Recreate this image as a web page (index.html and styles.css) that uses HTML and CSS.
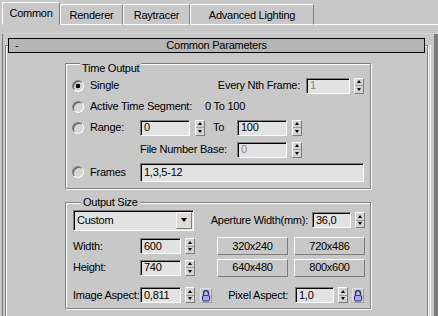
FILE: index.html
```html
<!DOCTYPE html>
<html>
<head>
<meta charset="utf-8">
<link rel="stylesheet" href="styles.css">
</head>
<body>
<div class="tabs">
  <div class="tab active w-com">Common</div>
  <div class="tab w-rend">Renderer</div>
  <div class="tab w-ray">Raytracer</div>
  <div class="tab w-adv">Advanced Lighting</div>
  <div class="tab-fill"></div>
</div>
<div class="page">
  <div class="panel">
    <div class="roll-col">
      <div class="rollout">
        <div class="roll-head"><span class="minus">-</span><span class="roll-title">Common Parameters</span><span></span></div>

        <div class="group time">
          <div class="group-title">Time Output</div>
          <div class="row tr1">
            <div class="lead"><span class="radio on"></span>Single</div>
            <div class="lbl-nth">Every Nth Frame:</div>
            <div class="field dis w-nth">1</div>
            <div class="spin"><i class="up"></i><i class="dn"></i></div>
          </div>
          <div class="row tr2">
            <div class="lead wide"><span class="radio"></span>Active Time Segment:</div>
            <div>0 To 100</div>
          </div>
          <div class="row tr3">
            <div class="lead"><span class="radio"></span>Range:</div>
            <div class="field w-rng">0</div>
            <div class="spin s5"><i class="up"></i><i class="dn"></i></div>
            <div class="lbl-to">To</div>
            <div class="field w-rng">100</div>
            <div class="spin s5"><i class="up"></i><i class="dn"></i></div>
          </div>
          <div class="row tr4">
            <div class="lead"></div>
            <div class="lbl-fnb">File Number Base:</div>
            <div class="field dis w-rng">0</div>
            <div class="spin s5"><i class="up"></i><i class="dn"></i></div>
          </div>
          <div class="row tr5">
            <div class="lead"><span class="radio"></span>Frames</div>
            <div class="field w-frames">1,3,5-12</div>
          </div>
        </div>

        <div class="group size">
          <div class="group-title">Output Size</div>
          <div class="row or1">
            <div class="select"><span class="sel-text">Custom</span><span class="sel-btn"><i></i></span></div>
            <div class="lbl-ap">Aperture Width(mm):</div>
            <div class="field w-ap">36,0</div>
            <div class="spin"><i class="up"></i><i class="dn"></i></div>
          </div>
          <div class="row or2">
            <div class="lbl">Width:</div>
            <div class="field w-sz">600</div>
            <div class="spin"><i class="up"></i><i class="dn"></i></div>
            <div class="btn first">320x240</div>
            <div class="btn">720x486</div>
          </div>
          <div class="row or3">
            <div class="lbl">Height:</div>
            <div class="field w-sz">740</div>
            <div class="spin"><i class="up"></i><i class="dn"></i></div>
            <div class="btn first">640x480</div>
            <div class="btn">800x600</div>
          </div>
          <div class="row or4">
            <div class="lbl">Image Aspect:</div>
            <div class="field w-sz">0,811</div>
            <div class="spin"><i class="up"></i><i class="dn"></i></div>
            <div class="lock l1"><svg width="12" height="15" viewBox="0 0 12 15"><path d="M3.6 7.5V5.2a2.4 2.4 0 0 1 4.8 0v2.3" fill="none" stroke="#2c2c9c" stroke-width="1.4"/><rect x="2.5" y="7.5" width="7" height="5.5" rx="1.5" fill="#a9a9e6" stroke="#2c2c9c"/></svg></div>
            <div class="lbl-pa">Pixel Aspect:</div>
            <div class="field w-ap">1,0</div>
            <div class="spin"><i class="up"></i><i class="dn"></i></div>
            <div class="lock"><svg width="12" height="15" viewBox="0 0 12 15"><path d="M3.6 7.5V5.2a2.4 2.4 0 0 1 4.8 0v2.3" fill="none" stroke="#2c2c9c" stroke-width="1.4"/><rect x="2.5" y="7.5" width="7" height="5.5" rx="1.5" fill="#a9a9e6" stroke="#2c2c9c"/></svg></div>
          </div>
        </div>
      </div>
    </div>
    <div class="scroll"><div class="thumb"></div><div class="trough"></div></div>
  </div>
</div>
</body>
</html>
```
FILE: styles.css
```css
* { box-sizing: border-box; margin: 0; padding: 0; }
html, body { width: 438px; height: 316px; overflow: hidden; background: #c8c8c8; }
body {
  font-family: "Liberation Sans", Arial, sans-serif;
  font-size: 11px;
  letter-spacing: -0.25px;
  line-height: 13px;
  color: #000;
}

/* tabs */
.tabs { display: flex; align-items: flex-end; height: 25px; padding-left: 2px; }
.tab {
  height: 21px;
  display: flex; align-items: center; justify-content: center;
  padding-top: 1px;
  border-left: 1px solid #fff;
  border-top: 1px solid #fff;
  border-right: 1px solid #7c7c7c;
  border-bottom: 1px solid #fff;
  border-radius: 2px 2px 0 0;
}
.tab.active { height: 23px; border-bottom-color: #c8c8c8; padding-bottom: 1px; }
.w-com { width: 58px; }
.w-rend { width: 63px; }
.w-ray { width: 67px; }
.w-adv { width: 124px; }
.tab-fill { flex: 1; border-bottom: 1px solid #fff; }

/* panel */
.page { padding-top: 8px; }
.panel {
  display: flex;
  height: 283px;
  overflow: hidden;
  margin-left: 2px;
  border-left: 1px solid #7c7c7c;
  border-top: 1px solid #d6d6d6;
}
.roll-col { flex: 1; padding: 0 2px; }
.scroll { width: 8px; display: flex; }
.thumb { width: 4px; margin-top: 11px; border-left: 1px solid #fff; }
.trough { width: 4px; background: #7c7c7c; }

.rollout {
  margin-top: 11px;
  border: 1px solid #808080;
  box-shadow: inset 1px 1px 0 #fff, 1px 1px 0 #fff;
  padding-bottom: 12px;
}
.roll-head {
  margin: -8px 2px 0 2px;
  height: 15px;
  border: 1px solid #000;
  background: #b6b6b6;
  display: grid;
  grid-template-columns: 1fr auto 1fr;
  align-items: center;
}
.minus { padding-left: 6px; }

/* groups */
.group {
  width: 306px;
  margin-left: 59px;
  border: 1px solid #808080;
  box-shadow: inset 1px 1px 0 #fff, 1px 1px 0 #fff;
}
.group-title {
  width: max-content;
  height: 13px;
  margin: -7px 0 0 8px;
  padding: 0 2px;
  background: #c8c8c8;
}
.time { margin-top: 10px; padding: 5px 0 5px 6px; }
.size { margin-top: 13px; padding: 0 0 2px 7px; }

.row { display: flex; align-items: center; height: 21px; }
.tr4 { height: 23px; }
.tr5 { height: 22px; }
.or1 { height: 22px; }
.or2 { height: 22px; margin-top: 4px; }
.or4 { height: 22px; margin-top: 6px; }

.lead { width: 68px; display: flex; align-items: center; flex: none; }
.lead.wide { width: 133px; }
.radio {
  width: 12px; height: 12px; flex: none;
  margin-right: 6px;
  border-radius: 50%;
  border: 1px solid;
  border-color: #808080 #ffffff #ffffff #808080;
  background: #d6d6d6;
  box-shadow: inset 1px 1px 0 #5a5a5a;
}
.radio.on { background: radial-gradient(circle at 50% 50%, #000 0 2px, #d6d6d6 2.6px); }

.lbl-nth { width: 160px; text-align: right; flex: none; }
.lbl-to { width: 24px; margin-left: 8px; flex: none; }
.lbl-fnb { width: 97px; flex: none; }
.lbl-ap { width: 114px; text-align: right; flex: none; }
.lbl { width: 67px; flex: none; }
.lbl-pa { width: 76px; text-align: right; flex: none; }

.field {
  height: 16px;
  flex: none;
  display: flex; align-items: center;
  padding-left: 3px;
  border: 1px solid;
  border-color: #808080 #ffffff #ffffff #808080;
  box-shadow: inset 1px 1px 0 #000;
  background: #e2e2e2;
}
.field.dis { color: #8a8a8a; }
.w-nth { width: 44px; margin-left: 6px; }
.w-rng { width: 50px; }
.w-frames { width: 224px; height: 19px; }
.w-ap { width: 39px; margin-left: 4px; }
.lbl-pa + .w-ap { margin-left: 7px; }
.w-sz { width: 41px; }

.spin {
  width: 10px; height: 16px; flex: none;
  margin-left: 4px;
  display: flex; flex-direction: column;
  border: 1px solid;
  border-color: #ffffff #7c7c7c #7c7c7c #ffffff;
  background: #d4d4d4;
}
.spin.s5 { margin-left: 5px; }
.spin i { flex: 1; display: flex; align-items: center; justify-content: center; }
.spin i::before { content: ""; border-left: 2.5px solid transparent; border-right: 2.5px solid transparent; }
.spin i.up::before { border-bottom: 3px solid #000; }
.spin i.dn::before { border-top: 3px solid #000; }
.spin i.up { border-bottom: 1px solid #9a9a9a; }

.select {
  width: 121px; height: 21px; flex: none;
  display: flex; align-items: stretch;
  border: 1px solid;
  border-color: #808080 #ffffff #ffffff #808080;
  box-shadow: inset 1px 1px 0 #000;
  background: #e2e2e2;
}
.sel-text { flex: 1; display: flex; align-items: center; padding-left: 3px; }
.sel-btn {
  width: 16px; flex: none;
  margin: 1px 1px 1px 0;
  display: flex; align-items: center; justify-content: center;
  border: 1px solid;
  border-color: #ffffff #7c7c7c #7c7c7c #ffffff;
  background: #dedbd2;
}
.sel-btn i { border-left: 3.5px solid transparent; border-right: 3.5px solid transparent; border-top: 4px solid #000; }

.btn {
  width: 71px; height: 18px; flex: none;
  margin-left: 6px;
  display: flex; align-items: center; justify-content: center;
  border: 1px solid;
  border-color: #ffffff #7c7c7c #7c7c7c #ffffff;
  background: #c8c8c8;
}
.btn.first { margin-left: 22px; }

.lock {
  width: 12px; height: 15px; flex: none;
  margin-left: 4px;
  display: flex;
  border: 1px solid;
  border-color: #e4e4e4 #a0a0a0 #a0a0a0 #e4e4e4;
}
.lock svg { display: block; margin: -1px; }
.lock.l1 { margin-left: 5px; }
```
